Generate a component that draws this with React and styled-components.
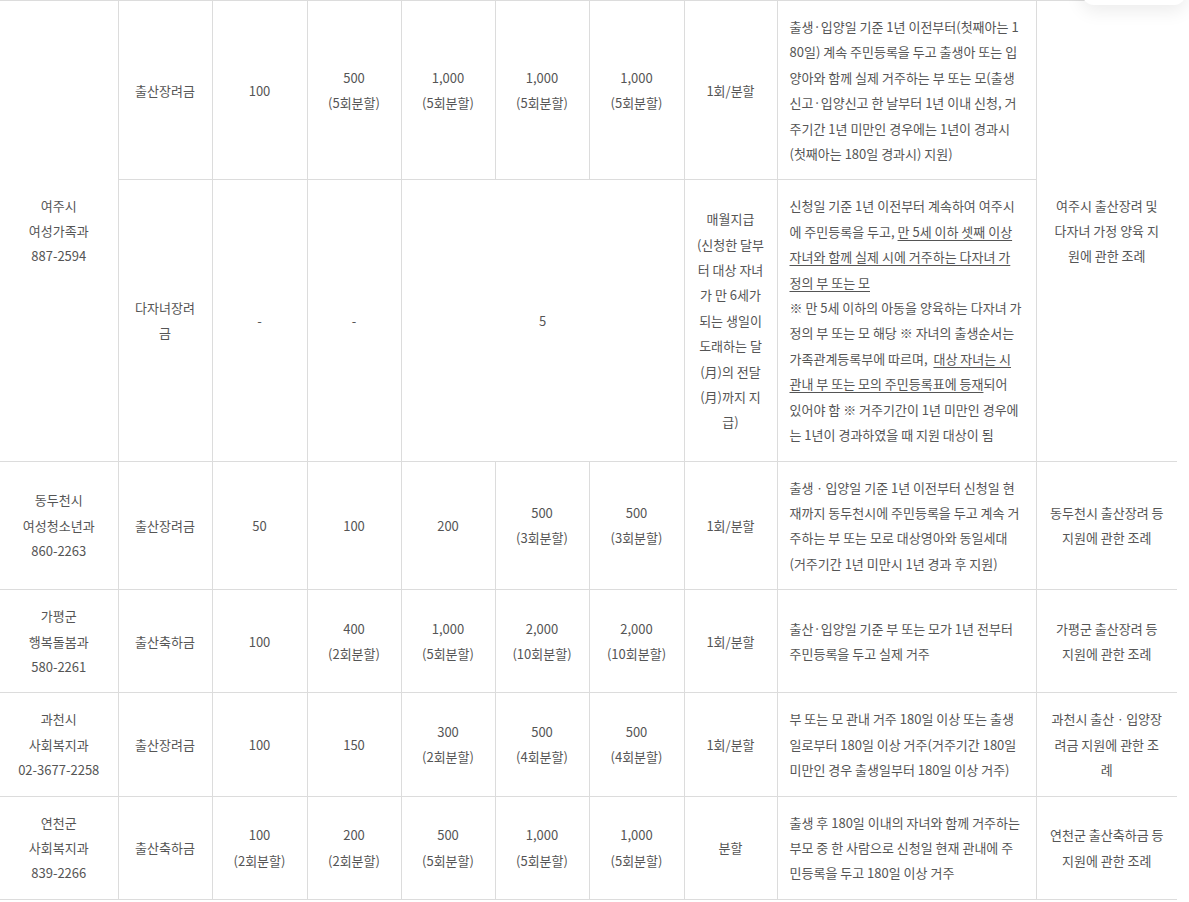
import styled, { createGlobalStyle } from "styled-components";

const GlobalStyle = createGlobalStyle`
  html, body {
    margin: 0;
    padding: 0;
    background: #fff;
  }
  body {
    font-family: "Noto Sans CJK KR", "Noto Sans", sans-serif;
    font-size: 13px;
    color: #555;
  }
`;

const rows = [
  {
    region: ["동두천시", "여성청소년과", "860-2263"],
    kind: "출산장려금",
    amounts: [["50"], ["100"], ["200"], ["500", "(3회분할)"], ["500", "(3회분할)"]],
    pay: "1회/분할",
    desc: "출생ㆍ입양일 기준 1년 이전부터 신청일 현재까지 동두천시에 주민등록을 두고 계속 거주하는 부 또는 모로 대상영아와 동일세대(거주기간 1년 미만시 1년 경과 후 지원)",
    law: "동두천시 출산장려 등 지원에 관한 조례",
  },
  {
    region: ["가평군", "행복돌봄과", "580-2261"],
    kind: "출산축하금",
    amounts: [["100"], ["400", "(2회분할)"], ["1,000", "(5회분할)"], ["2,000", "(10회분할)"], ["2,000", "(10회분할)"]],
    pay: "1회/분할",
    desc: "출산·입양일 기준 부 또는 모가 1년 전부터 주민등록을 두고 실제 거주",
    law: "가평군 출산장려 등 지원에 관한 조례",
  },
  {
    region: ["과천시", "사회복지과", "02-3677-2258"],
    kind: "출산장려금",
    amounts: [["100"], ["150"], ["300", "(2회분할)"], ["500", "(4회분할)"], ["500", "(4회분할)"]],
    pay: "1회/분할",
    desc: "부 또는 모 관내 거주 180일 이상 또는 출생일로부터 180일 이상 거주(거주기간 180일 미만인 경우 출생일부터 180일 이상 거주)",
    law: "과천시 출산ㆍ입양장려금 지원에 관한 조례",
  },
  {
    region: ["연천군", "사회복지과", "839-2266"],
    kind: "출산축하금",
    amounts: [["100", "(2회분할)"], ["200", "(2회분할)"], ["500", "(5회분할)"], ["1,000", "(5회분할)"], ["1,000", "(5회분할)"]],
    pay: "분할",
    desc: "출생 후 180일 이내의 자녀와 함께 거주하는 부모 중 한 사람으로 신청일 현재 관내에 주민등록을 두고 180일 이상 거주",
    law: "연천군 출산축하금 등 지원에 관한 조례",
  },
];

function Lines({ lines }) {
  return lines.map((l, i) => (
    <span key={i}>
      {i > 0 && <br />}
      {l}
    </span>
  ));
}

function SimpleRow({ row }) {
  return (
    <tr>
      <Cell $first>
        <Lines lines={row.region} />
      </Cell>
      <Cell>{row.kind}</Cell>
      {row.amounts.map((a, i) => (
        <Cell key={i}>
          <Lines lines={a} />
        </Cell>
      ))}
      <Cell>{row.pay}</Cell>
      <DescCell>{row.desc}</DescCell>
      <LawCell>{row.law}</LawCell>
    </tr>
  );
}

export default function App() {
  return (
    <>
      <GlobalStyle />
      <Page>
        <Table>
          <colgroup>
            <col style={{ width: 118 }} />
            <col style={{ width: 94 }} />
            <col style={{ width: 95 }} />
            <col style={{ width: 94 }} />
            <col style={{ width: 94 }} />
            <col style={{ width: 94 }} />
            <col style={{ width: 95 }} />
            <col style={{ width: 93 }} />
            <col style={{ width: 259 }} />
            <col style={{ width: 141 }} />
          </colgroup>
          <tbody>
            <tr>
              <Cell $first rowSpan={2}>
                <Lines lines={["여주시", "여성가족과", "887-2594"]} />
              </Cell>
              <Cell>출산장려금</Cell>
              <Cell>100</Cell>
              <Cell>
                <Lines lines={["500", "(5회분할)"]} />
              </Cell>
              <Cell>
                <Lines lines={["1,000", "(5회분할)"]} />
              </Cell>
              <Cell>
                <Lines lines={["1,000", "(5회분할)"]} />
              </Cell>
              <Cell>
                <Lines lines={["1,000", "(5회분할)"]} />
              </Cell>
              <Cell>1회/분할</Cell>
              <DescCell>
                출생·입양일 기준 1년 이전부터(첫째아는 180일) 계속 주민등록을 두고 출생아 또는 입양아와 함께
                실제 거주하는 부 또는 모(출생신고·입양신고 한 날부터 1년 이내 신청, 거주기간 1년 미만인
                경우에는 1년이 경과시(첫째아는 180일 경과시) 지원)
              </DescCell>
              <LawCell rowSpan={2}>여주시 출산장려 및 다자녀 가정 양육 지원에 관한 조례</LawCell>
            </tr>
            <tr>
              <Cell>다자녀장려금</Cell>
              <Cell>-</Cell>
              <Cell>-</Cell>
              <Cell colSpan={3}>5</Cell>
              <Cell>
                매월지급
                <br />
                (신청한 달부터 대상 자녀가 만 6세가 되는 생일이 도래하는 달(月)의 전달(月)까지 지급)
              </Cell>
              <DescCell>
                신청일 기준 1년 이전부터 계속하여 여주시에 주민등록을 두고,{" "}
                <u>만 5세 이하 셋째 이상 자녀와 함께 실제 시에 거주하는 다자녀 가정의 부 또는 모</u>
                <br />※ 만 5세 이하의 아동을 양육하는 다자녀 가정의 부 또는 모 해당 ※ 자녀의 출생순서는
                가족관계등록부에 따르며,{"\u00a0 "}
                <u>대상 자녀는 시 관내 부 또는 모의 주민등록표에 등재</u>되어 있어야 함 ※ 거주기간이 1년
                미만인 경우에는 1년이 경과하였을 때 지원 대상이 됨
              </DescCell>
            </tr>
            {rows.map((r, i) => (
              <SimpleRow key={i} row={r} />
            ))}
          </tbody>
        </Table>
        <FloatingBox />
      </Page>
    </>
  );
}

const Page = styled.div`
  position: relative;
  width: 1189px;
  height: 902px;
  overflow: hidden;
  background: #fff;
`;

const Table = styled.table`
  width: 1177px;
  table-layout: fixed;
  border-collapse: collapse;
  border-top: 1px solid #dcdcdc;
`;

const Cell = styled.td`
  padding: 13px 12px;
  border-bottom: 1px solid #dcdcdc;
  border-left: ${(p) => (p.$first ? "none" : "1px solid #dcdcdc")};
  text-align: center;
  vertical-align: middle;
  line-height: 25.4px;
  word-break: break-all;

  u {
    text-decoration: underline;
    text-underline-offset: 3px;
  }
`;

const DescCell = styled(Cell)`
  text-align: left;
  padding: 13px 14px 13px 12px;
`;

const LawCell = styled(Cell)`
  padding: 13px 13px;
`;

const FloatingBox = styled.div`
  position: absolute;
  top: -40px;
  left: 1082px;
  width: 104px;
  height: 45px;
  background: #fff;
  border-radius: 12px;
  box-shadow: 0 6px 18px rgba(0, 0, 0, 0.08);
`;
